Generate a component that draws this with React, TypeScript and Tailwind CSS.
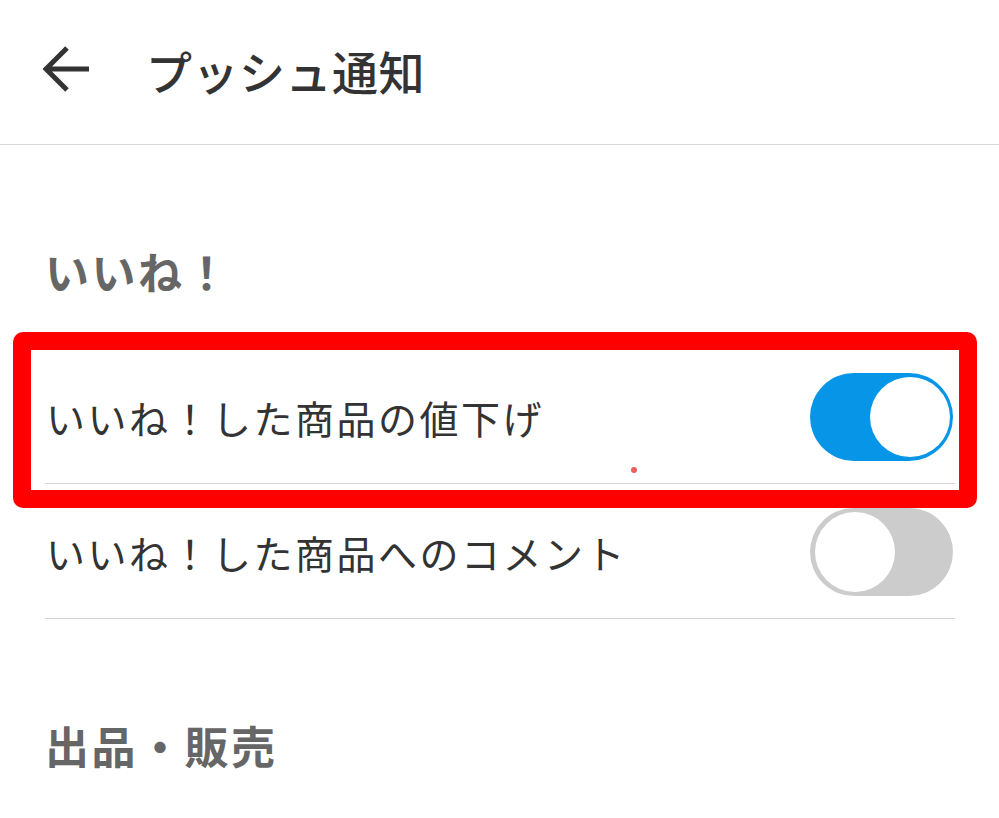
import React from 'react';

const font = { fontFamily: '"Noto Sans CJK JP", "Noto Sans", sans-serif' };

function Toggle({ on }: { on: boolean }) {
  return (
    <div
      className={`flex h-[88px] w-[143px] shrink-0 items-center rounded-full px-[4px] ${
        on ? 'justify-end bg-[#0795e8] pr-[3px]' : 'justify-start bg-[#cccccc] pl-[5px]'
      }`}
    >
      <div className="h-[80px] w-[80px] rounded-full bg-white" />
    </div>
  );
}

function SettingRow({ label, on }: { label: string; on: boolean }) {
  return (
    <div className="ml-[45px] flex h-[134px] w-[910px] items-center justify-between border-b border-[#d4d4d4] pr-[2px]">
      <span className="pl-[1px] text-[39px] leading-[60px] tracking-[2.5px] text-[#333333]">{label}</span>
      <Toggle on={on} />
    </div>
  );
}

function SectionLabel({ text, h }: { text: string; h: string }) {
  return (
    <div className={`${h} pl-[45px] pt-[96px]`}>
      <span className="text-[44px] font-semibold leading-[60px] tracking-[2.5px] text-[#666666]">{text}</span>
    </div>
  );
}

export default function App() {
  return (
    <div className="relative h-[818px] w-[999px] overflow-hidden bg-white" style={font}>
      <header className="flex h-[145px] items-center border-b border-[#d9d9d9] pb-[4px]">
        <svg className="ml-[43px]" width="48" height="48" viewBox="0 0 48 48" fill="none">
          <path
            d="M46 23H4M24 2L3 23L24 44"
            stroke="#333333"
            strokeWidth="5"
            strokeLinecap="butt"
            strokeLinejoin="miter"
          />
        </svg>
        <h1 className="ml-[55px] text-[46px] font-medium leading-[60px] tracking-[0.5px] text-[#333333]">
          プッシュ通知
        </h1>
      </header>

      <SectionLabel text="いいね！" h="h-[205px]" />
      <SettingRow label="いいね！した商品の値下げ" on={true} />
      <div className="h-[1px]" />
      <SettingRow label="いいね！した商品へのコメント" on={false} />
      <SectionLabel text="出品・販売" h="h-[200px]" />

      {/* annotation overlay */}
      <div className="pointer-events-none absolute left-[13px] top-[332px] h-[176px] w-[964px] rounded-[10px] border-[18px] border-[#ff0000]" />
      <div className="absolute left-[631px] top-[467px] h-[6px] w-[6px] rounded-full bg-[#ee5f5f]" />
    </div>
  );
}
